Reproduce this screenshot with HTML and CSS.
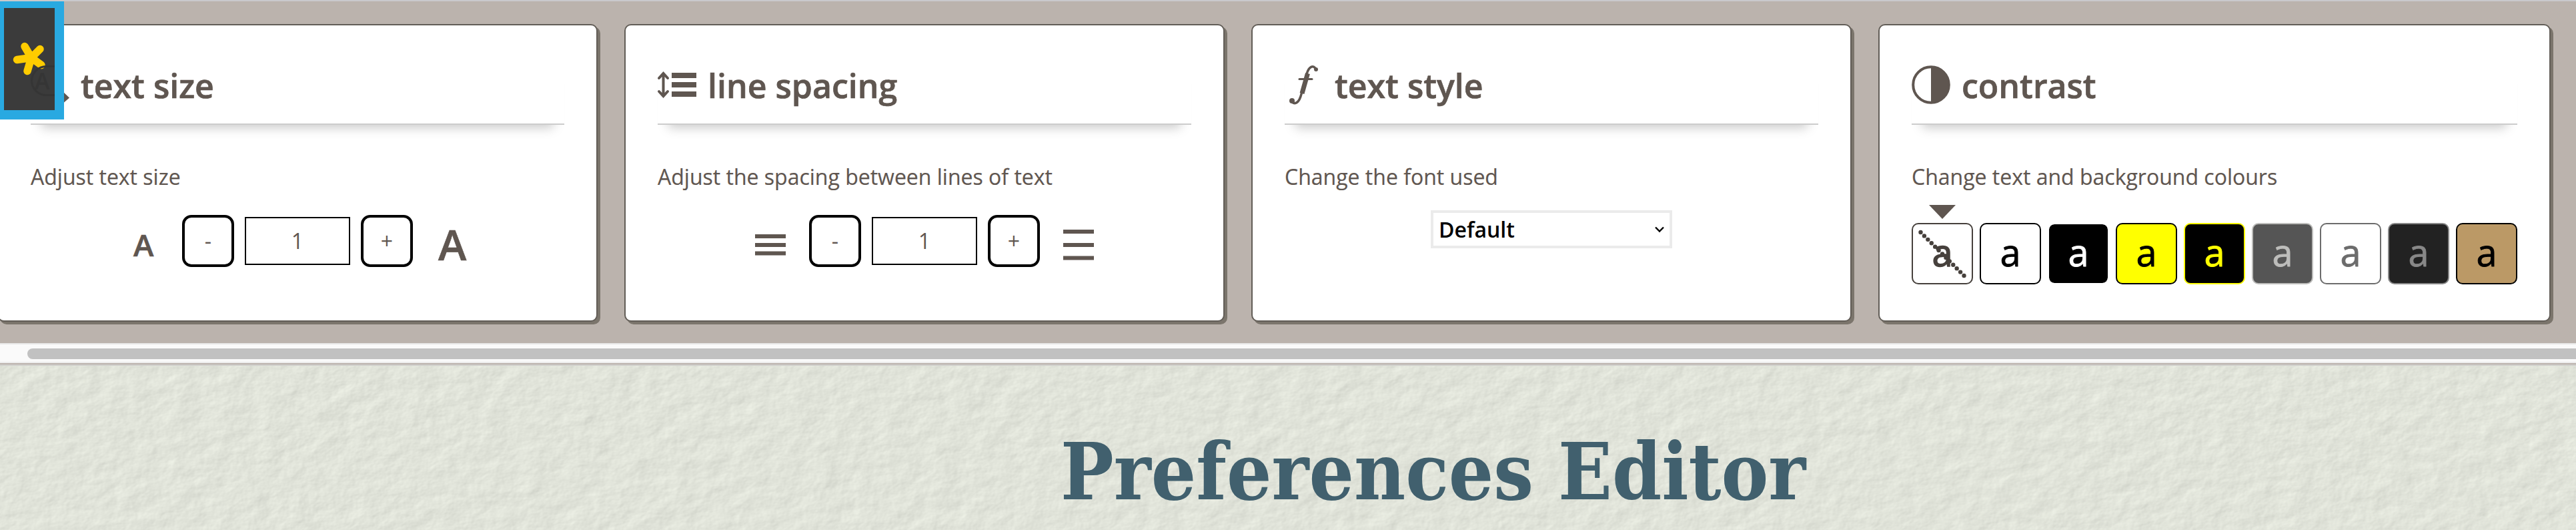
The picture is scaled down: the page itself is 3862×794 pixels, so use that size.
FILE: index.html
```
<!DOCTYPE html>
<html lang="en">
<head>
<meta charset="utf-8">
<title>Preferences Editor</title>
<link rel="stylesheet" href="styles.css">
</head>
<body>
<section class="prefs">
  <div class="cards">
    <article class="card">
      <h2 class="card-head"><svg class="icon icon-size" viewBox="0 0 60 60"><circle cx="23" cy="23" r="21" fill="none" stroke="currentColor" stroke-width="4"/><path d="M46 38L58 49.500L46 60L36 48Z" fill="currentColor"/></svg><span>text size</span></h2>
      <p class="desc">Adjust text size</p>
      <div class="stepper stepper-size">
        <span class="mark small-a">A</span>
        <button class="step">-</button><span class="value">1</span><button class="step">+</button>
        <span class="mark large-a">A</span>
      </div>
    </article>
    <article class="card">
      <h2 class="card-head"><svg class="icon icon-line" viewBox="0 0 60 60"><path d="M8.500 13V47M2 20L8.500 13L15 20M2 40L8.500 47L15 40" fill="none" stroke="currentColor" stroke-width="4" stroke-linecap="round"/><path d="M21 12h37v8H21zM21 26h37v8H21zM21 40h37v8H21z" fill="currentColor"/></svg><span>line spacing</span></h2>
      <p class="desc">Adjust the spacing between lines of text</p>
      <div class="stepper">
        <svg class="lines lines-left" viewBox="0 0 46 46"><path d="M0 7h46v6H0zM0 20h46v6H0zM0 32.500h46v6H0z" fill="currentColor"/></svg>
        <button class="step">-</button><span class="value">1</span><button class="step">+</button>
        <svg class="lines lines-right" viewBox="0 0 46 46"><path d="M0 0h46v6H0zM0 20h46v6H0zM0 39.500h46v6H0z" fill="currentColor"/></svg>
      </div>
    </article>
    <article class="card">
      <h2 class="card-head"><svg class="icon icon-f" viewBox="0 0 60 60" fill="none" stroke="currentColor" stroke-linecap="round"><path d="M47 7C43-1 36 3 33 14L25 44C22 56 16 61 10 55" stroke-width="3.500"/><path d="M34.500 13L26 43" stroke-width="7" stroke-linecap="butt"/><path d="M22 21.500H41" stroke-width="3"/><circle cx="47" cy="7" r="3" fill="currentColor" stroke="none"/><circle cx="11" cy="54" r="4" fill="currentColor" stroke="none"/></svg><span>text style</span></h2>
      <p class="desc">Change the font used</p>
      <div class="select"><span>Default</span><svg class="chevron" viewBox="0 0 14 10"><path d="M1 1.500L7 7.500L13 1.500" fill="none" stroke="#000" stroke-width="2.400"/></svg></div>
    </article>
    <article class="card card-wide">
      <h2 class="card-head"><svg class="icon icon-contrast" viewBox="0 0 58 58"><circle cx="29" cy="29" r="26.800" fill="none" stroke="currentColor" stroke-width="4"/><path d="M29 2A27 27 0 0 1 29 56Z" fill="currentColor"/></svg><span>contrast</span></h2>
      <p class="desc">Change text and background colours</p>
      <div class="swatches">
        <span class="swatch sw-default">a<svg class="strike" viewBox="0 0 92 92"><path d="M13.500 14L78.500 79" stroke="currentColor" stroke-width="6.400" stroke-linecap="round" stroke-dasharray="0 7.660"/></svg></span>
        <span class="swatch sw-bw">a</span>
        <span class="swatch sw-wb">a</span>
        <span class="swatch sw-by">a</span>
        <span class="swatch sw-yb">a</span>
        <span class="swatch sw-lgdg">a</span>
        <span class="swatch sw-gw">a</span>
        <span class="swatch sw-gd">a</span>
        <span class="swatch sw-bbr">a</span>
      </div>
    </article>
  </div>
  <div class="scrollbar"><div class="thumb"></div></div>
  <div class="badge"><svg viewBox="0 0 76 152"><path d="M41 74L31 57M41 74L54 61M41 74L19.500 77M41 74L56 85M41 74L35 94" fill="none" stroke="#fc0" stroke-width="11.500" stroke-linecap="round"/></svg><span class="ghost">A</span></div>
</section>
<main class="page">
  <svg class="paper" width="100%" height="100%">
    <filter id="paper" x="0" y="0" width="100%" height="100%" color-interpolation-filters="sRGB">
      <feTurbulence type="fractalNoise" baseFrequency="0.028 0.04" numOctaves="4" seed="4"/>
      <feDiffuseLighting lighting-color="#e0e3d9" surfaceScale="0.750" diffuseConstant="1.180"><feDistantLight azimuth="215" elevation="58"/></feDiffuseLighting>
    </filter>
    <rect width="100%" height="100%" filter="url(#paper)"/>
  </svg>
  <h1 class="title">Preferences Editor</h1>
</main>
</body>
</html>
```
FILE: styles.css
```
* { box-sizing: border-box; }
body { margin: 0; width: 3862px; height: 794px; overflow: hidden; font-family: "Open Sans", sans-serif; color: #5f5650; background: #dfe2d8; }
.prefs { position: relative; height: 548px; padding-top: 34px; background: #bbb3ad; border-top: 2px solid #c9c9cc; border-bottom: 2px solid #d0cfcc; }
.cards { display: flex; gap: 40px; margin-left: -4px; height: 478px; align-items: flex-start; }
.card { flex: none; width: 900px; height: 446px; padding: 48px; background: #fff; border: 2px solid #625d57; border-radius: 10px; box-shadow: 4px 4px 0 #7b756c; display: flex; flex-direction: column; }
.card-wide { width: 1008px; }
.card-head { flex: none; display: flex; align-items: center; height: 101px; margin: 0; padding-bottom: 17px; border-bottom: 2px solid #ccc; box-shadow: 0 20px 16px -16px rgba(0,0,0,.22); font-size: 50px; font-weight: 600; line-height: 80px; color: #5f5650; -webkit-text-stroke: .7px currentColor; }
.card-head > span { padding-top: 2px; }
.icon { flex: none; width: 60px; height: 60px; margin-right: 15px; overflow: visible; }
.icon-contrast { width: 58px; height: 58px; margin-right: 17px; }
.desc { flex: none; margin: 56px 0 0; font-size: 32px; line-height: 44px; -webkit-text-stroke: .2px currentColor; }
.stepper { display: flex; justify-content: center; align-items: center; height: 78px; margin-top: 35px; }
.stepper-size { padding-left: 7px; }
.step { width: 78px; height: 78px; padding: 0; border: 4px solid #000; border-radius: 14px; background: #fff; color: inherit; font: 32px/44px "Open Sans", sans-serif; }
.value { width: 158px; height: 72px; margin: 0 16px; border: 2px solid #000; text-align: center; font-size: 32px; line-height: 68px; }
.mark { font-weight: 600; text-align: center; -webkit-text-stroke: .6px currentColor; }
.small-a { width: 30px; margin-right: 43px; padding-top: 10px; font-size: 46px; }
.large-a { width: 42px; margin-left: 38px; padding-top: 8px; font-size: 64px; }
.lines { width: 46px; height: 46px; margin-top: 12px; }
.lines-left { margin-right: 35px; }
.lines-right { margin-left: 35px; }
.select { align-self: center; display: flex; align-items: center; justify-content: space-between; width: 362px; height: 57px; margin-top: 28px; padding: 0 8px; border: 4px solid #ebebeb; color: #000; font-size: 32px; font-weight: 600; }
.chevron { width: 14px; height: 10px; }
.swatches { position: relative; display: flex; justify-content: space-between; margin-top: 47px; }
.swatches::before { content: ""; position: absolute; left: 26px; top: -27px; border: 20px solid transparent; border-top: 21px solid #5f5650; border-bottom: 0; }
.swatch { position: relative; width: 92px; height: 92px; border: 2px solid #000; border-radius: 10px; text-align: center; font-size: 56px; line-height: 82px; color: #000; -webkit-text-stroke: .8px currentColor; }
.strike { position: absolute; left: -2px; top: -2px; width: 92px; height: 92px; }
.sw-default { color: #46403c; border-color: #46403c; -webkit-text-stroke-width: 1.4px; }
.sw-wb { background: #000; background-clip: padding-box; color: #fff; border-color: #fff; }
.sw-by { background: #ff0; }
.sw-yb { background: #000; color: #ff0; border-color: #ff0; }
.sw-lgdg { background: #555; color: #bdbdbb; border-color: #bdbdbb; }
.sw-gw { color: #6c6c6c; border-color: #6c6c6c; }
.sw-gd { background: #222; color: #888; border-color: #888; }
.sw-bbr { background: #bb9966; }
.scrollbar { height: 30px; padding: 6px 0 6px 41px; background: #fafafa; border-top: 2px solid #e8e8e8; border-bottom: 2px solid #ededed; }
.thumb { height: 16px; border-radius: 8px 0 0 8px; background: #c1c1c1; }
.badge { position: absolute; left: 0; top: 0; width: 96px; height: 177px; padding: 10px 14px 14px 6px; background: #29a9e1; }
.badge svg { display: block; width: 76px; height: 153px; background: #3b3b3b; }
.ghost { position: absolute; left: 46px; top: 96px; width: 36px; height: 46px; overflow: hidden; border: 3px solid #353535; border-right: 0; border-radius: 23px 0 0 23px; color: #353535; font-size: 34px; font-weight: 600; line-height: 40px; padding-left: 3px; }
.page { position: relative; height: 246px; }
.paper { position: absolute; inset: 0; }
.title { position: relative; margin: 0; padding-top: 84px; padding-left: 1590px; font-family: "DejaVu Serif Condensed", "DejaVu Serif", serif; font-stretch: condensed; font-size: 118px; line-height: 150px; font-weight: 700; color: #41606e; white-space: nowrap; }
```
